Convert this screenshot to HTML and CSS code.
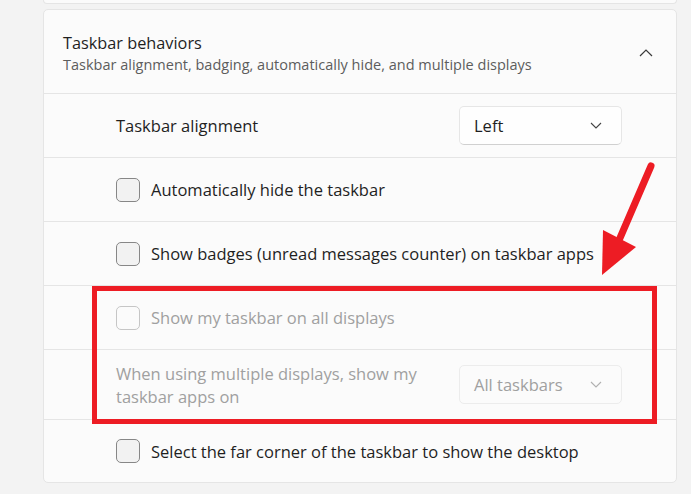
FILE: index.html
```html
<!DOCTYPE html>
<html lang="en">
<head>
<meta charset="utf-8">
<title>Taskbar behaviors</title>
<link rel="stylesheet" href="styles.css">
</head>
<body>
<div class="page">
  <div class="prev-card"></div>
  <section class="card">
    <header class="card-head">
      <div class="head-text">
        <div class="title">Taskbar behaviors</div>
        <div class="subtitle">Taskbar alignment, badging, automatically hide, and multiple displays</div>
      </div>
      <svg class="chev-up" width="14" height="8" viewBox="0 0 14 8"><path d="M1 7 L7 1 L13 7" fill="none" stroke="#3a3a3a" stroke-width="1.2"/></svg>
    </header>
    <div class="row">
      <span class="label">Taskbar alignment</span>
      <div class="select"><span>Left</span><svg width="12" height="7" viewBox="0 0 12 7"><path d="M1 1 L6 6 L11 1" fill="none" stroke="#444" stroke-width="1.1"/></svg></div>
    </div>
    <div class="row">
      <label class="check"><span class="box"></span><span>Automatically hide the taskbar</span></label>
    </div>
    <div class="row">
      <label class="check"><span class="box"></span><span>Show badges (unread messages counter) on taskbar apps</span></label>
    </div>
    <div class="row disabled">
      <label class="check"><span class="box"></span><span>Show my taskbar on all displays</span></label>
    </div>
    <div class="row row-tall disabled">
      <span class="label label-wrap">When using multiple displays, show my taskbar apps on</span>
      <div class="select"><span>All taskbars</span><svg width="12" height="7" viewBox="0 0 12 7"><path d="M1 1 L6 6 L11 1" fill="none" stroke="#b0b0b0" stroke-width="1.1"/></svg></div>
    </div>
    <div class="row row-last">
      <label class="check"><span class="box"></span><span>Select the far corner of the taskbar to show the desktop</span></label>
    </div>
  </section>
  <div class="highlight"></div>
  <svg class="arrow" width="691" height="494" viewBox="0 0 691 494">
    <line x1="651" y1="166" x2="620" y2="238" stroke="#ed1c24" stroke-width="7" stroke-linecap="round"/>
    <polygon points="603,230 636,247 602,275" fill="#ed1c24"/>
  </svg>
</div>
</body>
</html>
```
FILE: styles.css
```css
html, body {
  margin: 0;
  padding: 0;
  background: #f3f3f3;
}
body {
  font-family: "Open Sans", "Noto Sans", sans-serif;
  color: #1f1f1f;
  width: 691px;
  height: 494px;
  overflow: hidden;
}
.page {
  position: relative;
  width: 691px;
  height: 494px;
  padding-left: 43px;
  box-sizing: border-box;
}
.prev-card {
  width: 634px;
  height: 4px;
  box-sizing: border-box;
  background: #fbfbfb;
  border: 1px solid #e5e5e5;
  border-top: none;
  border-radius: 0 0 5px 5px;
}
.card {
  margin-top: 5px;
  width: 634px;
  box-sizing: border-box;
  background: #fbfbfb;
  border: 1px solid #e5e5e5;
  border-radius: 5px;
}
.card-head {
  height: 83px;
  display: flex;
  align-items: center;
  justify-content: space-between;
  padding: 0 23px 0 19px;
  box-sizing: border-box;
}
.head-text {
  display: flex;
  flex-direction: column;
  gap: 0;
  margin-top: 5px;
}
.title {
  font-size: 16.3px;
  line-height: 21px;
  color: #1f1f1f;
}
.subtitle {
  font-size: 14.5px;
  line-height: 21px;
  color: #5d5d5d;
}
.chev-up {
  margin-top: 2px;
}
.row {
  height: 64px;
  border-top: 1px solid #e5e5e5;
  box-sizing: border-box;
  display: flex;
  align-items: center;
  justify-content: space-between;
  padding: 0 54px 0 72px;
  font-size: 16.5px;
}
.row-tall {
  height: 70px;
}
.row-last {
  height: 63px;
}
.label-wrap {
  width: 320px;
  line-height: 23px;
}
.check {
  display: flex;
  align-items: center;
  gap: 11px;
}
.box {
  width: 24px;
  height: 24px;
  box-sizing: border-box;
  border: 1px solid #878787;
  border-radius: 5px;
  background: #f2f2f2;
  flex: none;
}
.select {
  width: 163px;
  height: 39px;
  box-sizing: border-box;
  border: 1px solid #e6e6e6;
  border-bottom-color: #d0d0d0;
  border-radius: 5px;
  background: #fefefe;
  display: flex;
  align-items: center;
  justify-content: space-between;
  padding: 0 19px 0 14px;
}
.disabled {
  color: #a0a0a0;
}
.disabled .box {
  border-color: #c6c6c6;
  background: transparent;
}
.disabled .select {
  border-color: #ececec;
  background: #fbfbfb;
}
.highlight {
  position: absolute;
  left: 92px;
  top: 286px;
  width: 565px;
  height: 138px;
  box-sizing: border-box;
  border: 5px solid #ed1c24;
}
.arrow {
  position: absolute;
  left: 0;
  top: 0;
  pointer-events: none;
}
```
